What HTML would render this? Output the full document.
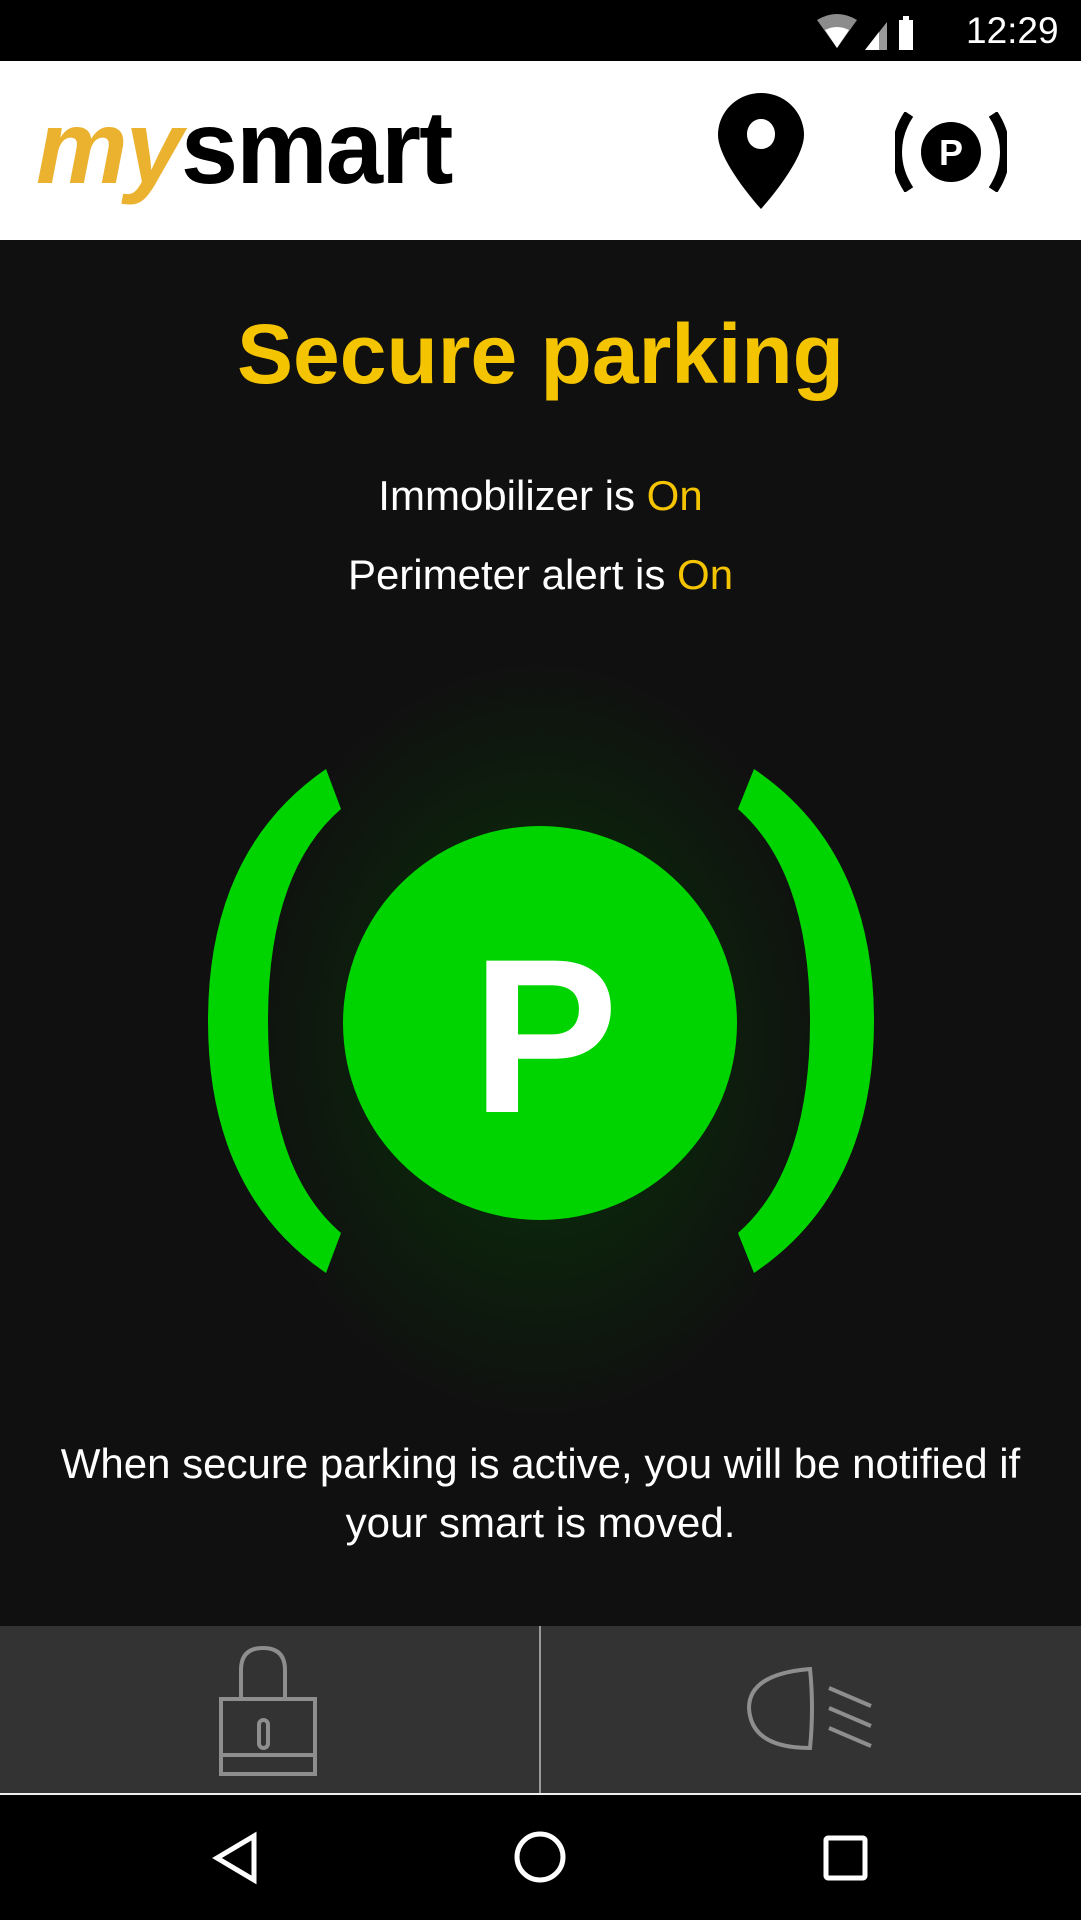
<!DOCTYPE html>
<html><head><meta charset="utf-8"><style>
*{margin:0;padding:0;box-sizing:border-box}
body{width:1081px;height:1920px;position:relative;background:#000;font-family:"Liberation Sans",sans-serif;overflow:hidden}
.abs{position:absolute}
</style></head><body>
<div class="abs" style="left:0;top:0;width:1081px;height:61px;background:#000"></div>
<svg class="abs" style="left:815px;top:12px" width="100" height="40" viewBox="0 0 100 40">
<path d="M2 8 Q22 -4 42 8 L22 36 Z" fill="#fff" opacity="0.55"/><path d="M10 18 Q22 12 34 18 L22 36Z" fill="#fff"/>
<path d="M50 38 L72 10 L72 38Z" fill="#fff" opacity="0.6"/><path d="M50 38 L64 20 L64 38Z" fill="#fff"/>
<rect x="84" y="8" width="14" height="30" fill="#fff"/><rect x="88" y="4" width="6" height="4" fill="#fff"/>
</svg>
<div class="abs" style="left:966px;top:10px;color:#fff;font-size:37px;">12:29</div>

<div class="abs" style="left:0;top:61px;width:1081px;height:179px;background:#fff"></div>
<div class="abs" style="left:36px;top:96px;font-size:104px;font-weight:bold;letter-spacing:-2px;line-height:1;transform:scaleX(0.99);transform-origin:left"><span style="color:#ebb22f;font-style:italic">my</span><span style="color:#000">smart</span></div>
<svg class="abs" style="left:718px;top:93px" width="86" height="116" viewBox="0 0 86 116"><path d="M43 0 C19 0 0 19 0 42 C0 60 20 90 43 116 C66 90 86 60 86 42 C86 19 67 0 43 0Z M43 26 C51 26 57 33 57 41 C57 50 51 56 43 56 C35 56 29 50 29 41 C29 33 35 26 43 26Z" fill="#000" fill-rule="evenodd"/></svg>
<svg class="abs" style="left:895px;top:112px" width="112" height="80" viewBox="0 0 112 80">
<path d="M14 2 Q2 20 2 40 Q2 60 14 78" stroke="#000" stroke-width="10" fill="none"/>
<path d="M98 2 Q110 20 110 40 Q110 60 98 78" stroke="#000" stroke-width="10" fill="none"/>
<circle cx="56" cy="40" r="30" fill="#000"/>
<text x="56" y="53" text-anchor="middle" font-family="Liberation Sans" font-weight="bold" font-size="36" fill="#fff">P</text></svg>

<div class="abs" style="left:0;top:240px;width:1081px;height:1386px;background:radial-gradient(ellipse 300px 380px at 540px 800px,#124812 0%,#0b260b 40%,#101010 100%)"></div>
<div class="abs" style="left:0;top:306px;width:1081px;text-align:center;color:#f5c400;font-size:84px;font-weight:bold">Secure parking</div>
<div class="abs" style="left:0;top:472px;width:1081px;text-align:center;color:#fff;font-size:42px">Immobilizer is <span style="color:#f5c400">On</span></div>
<div class="abs" style="left:0;top:551px;width:1081px;text-align:center;color:#fff;font-size:42px">Perimeter alert is <span style="color:#f5c400">On</span></div>
<svg class="abs" style="left:200px;top:760px" width="680" height="520" viewBox="200 760 680 520">
<path d="M326 769 Q208 850 208 1021 Q208 1192 326 1273 L341 1233 Q268 1170 268 1021 Q268 872 341 809Z" fill="#00d400"/>
<path d="M754 769 Q874 850 874 1021 Q874 1192 754 1273 L738 1233 Q810 1170 810 1021 Q810 872 738 809Z" fill="#00d400"/>
<circle cx="540" cy="1023" r="197" fill="#00d400"/>
<text x="545" y="1112" text-anchor="middle" font-family="Liberation Sans" font-weight="bold" font-size="220" fill="#fff">P</text></svg>
<div class="abs" style="left:20px;top:1434px;width:1041px;text-align:center;color:#fff;font-size:42px;line-height:59px">When secure parking is active, you will be notified if your smart is moved.</div>

<div class="abs" style="left:0;top:1626px;width:1081px;height:168px;background:#333"></div>
<div class="abs" style="left:539px;top:1626px;width:2px;height:168px;background:#999"></div>
<div class="abs" style="left:0;top:1793px;width:1081px;height:2px;background:#eee"></div>
<svg class="abs" style="left:215px;top:1645px" width="106" height="132" viewBox="0 0 106 132" fill="none" stroke="#8e8e8e" stroke-width="4">
<path d="M26 55 V25 Q26 3 48 3 Q70 3 70 25 V55"/><rect x="6" y="54" width="94" height="75"/><line x1="6" y1="110" x2="100" y2="110"/><rect x="44" y="75" width="9" height="28" rx="4.5"/></svg>
<svg class="abs" style="left:747px;top:1666px" width="130" height="90" viewBox="0 0 130 90" fill="none" stroke="#8e8e8e" stroke-width="4">
<path d="M63 3 Q2 8 2 42 Q4 82 63 82 Q67 42 63 3Z"/><line x1="82" y1="22" x2="124" y2="40"/><line x1="82" y1="42" x2="124" y2="60"/><line x1="82" y1="62" x2="124" y2="80"/></svg>

<svg class="abs" style="left:0;top:1795px" width="1081" height="125" viewBox="0 1795 1081 125" fill="none" stroke="#fff" stroke-width="5">
<path d="M254 1836 L217 1858 L254 1880Z"/><circle cx="540" cy="1857" r="23"/><rect x="826" y="1838" width="39" height="40" rx="2"/></svg>
</body></html>
